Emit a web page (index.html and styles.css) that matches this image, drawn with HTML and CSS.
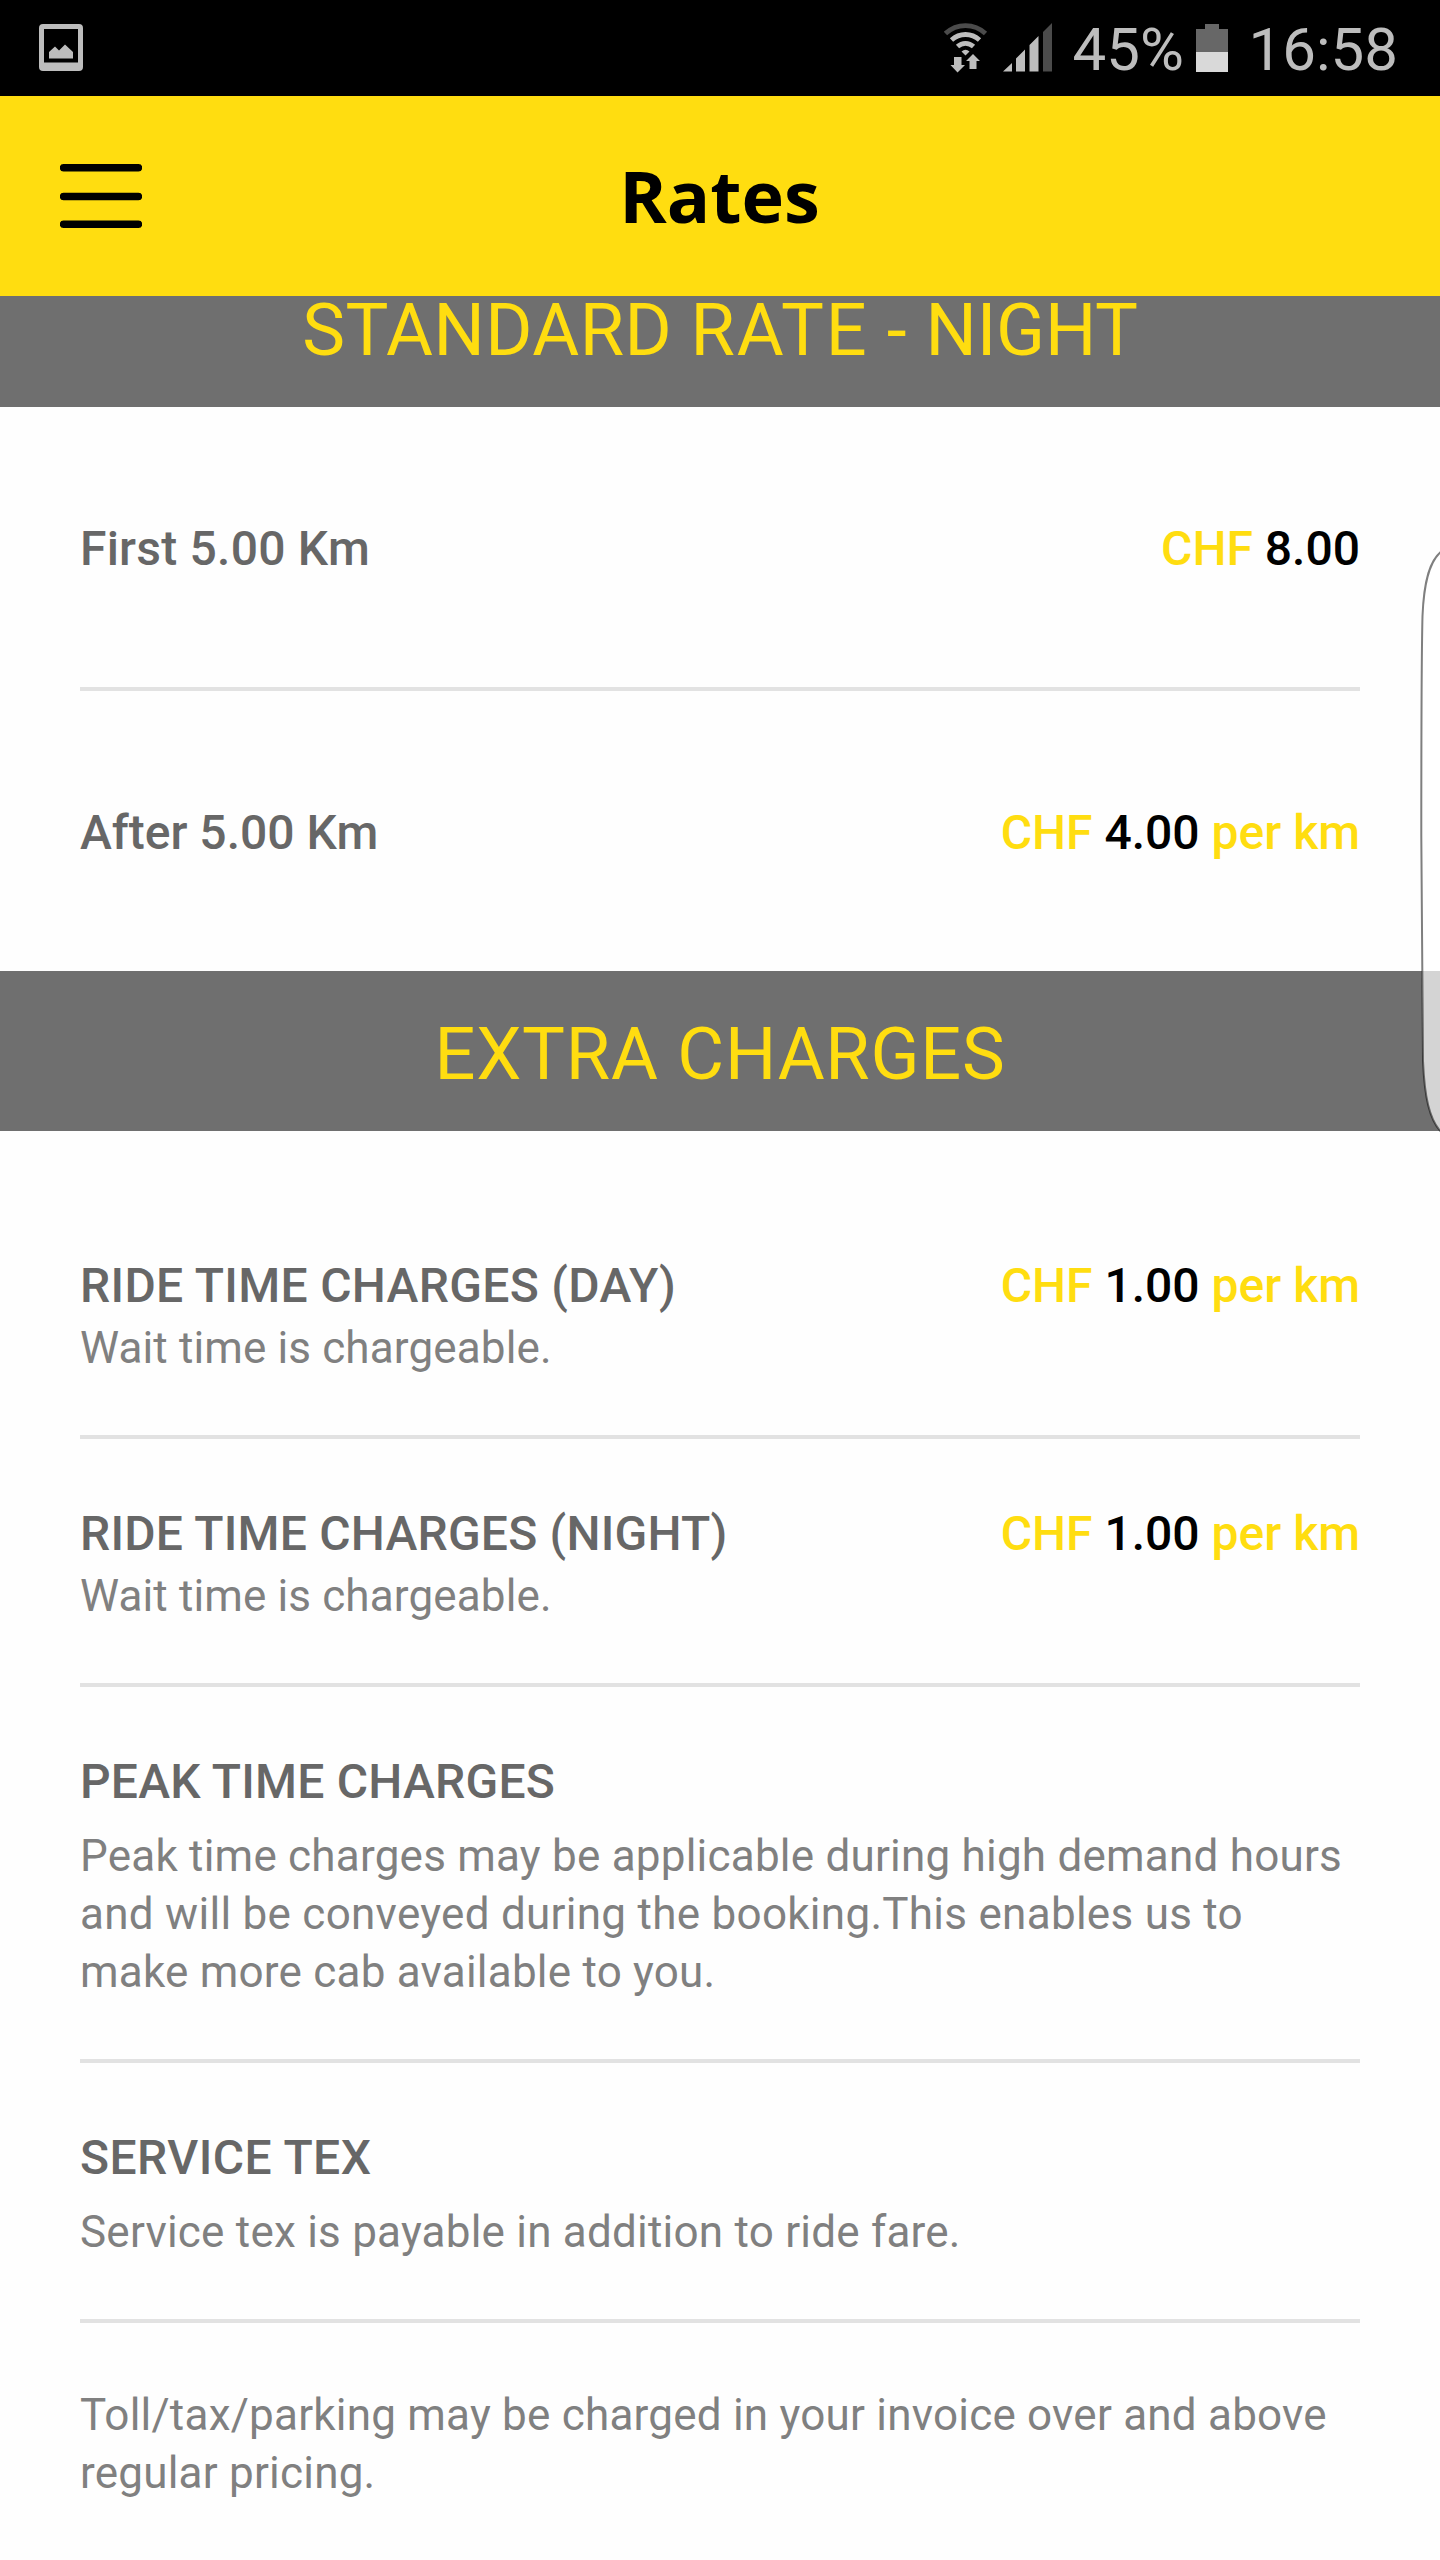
FILE: index.html
```html
<!DOCTYPE html>
<html lang="en">
<head>
<meta charset="utf-8">
<title>Rates</title>
<link rel="stylesheet" href="styles.css">
</head>
<body>
<div class="screen">
  <div class="statusbar">
    <svg class="icon-picture" width="44" height="48" viewBox="0 0 44 48">
      <path fill="#bdbdbd" fill-rule="evenodd" d="M4 0H40Q44 0 44 4V43Q44 47 40 47H4Q0 47 0 43V4Q0 0 4 0ZM5 5V38.500H39V5Z"/>
      <path fill="#bdbdbd" d="M10 34.500V28L16 22.500L20 26.500L26 20.500L34 28V34.500Z"/>
    </svg>
    <div class="status-right">
      <svg class="icon-wifi" width="44" height="50" viewBox="0 0 44 50">
        <g fill="none" stroke-width="4.800">
          <path stroke="#4b4b4b" d="M1.500 10.500Q10 2.600 21.500 2.600T41.500 10.500"/>
          <path stroke="#bdbdbd" d="M7.500 17Q13.500 11.500 21.500 11.500T35.500 17"/>
          <path stroke="#bdbdbd" d="M13.500 23.500Q17 20.300 21.500 20.300T29.500 23.500"/>
        </g>
        <path fill="#bdbdbd" d="M17.500 28.500Q21.500 25 25.500 28.500L21.500 32.500ZM10 34H17.500V42H21L13.500 49.500L6.500 42H10ZM25.500 46V38H22L29 31L36 38H32.500V46Z"/>
      </svg>
      <svg class="icon-signal" width="50" height="49" viewBox="0 0 50 49">
        <path fill="#bdbdbd" d="M0 48.500L9 40V48.500ZM13 48.500V35.500L22 26.500V48.500ZM26.500 48.500V22L35.500 13V48.500Z"/>
        <path fill="#4b4b4b" d="M40 48.500V9L49 0V48.500Z"/>
      </svg>
      <span class="status-text percent">45%</span>
      <svg class="icon-battery" width="32" height="48" viewBox="0 0 32 48">
        <path fill="#676767" d="M0 5H9V0H23V5H32V28H0Z"/>
        <path fill="#d9d9d9" d="M0 28H32V48H0Z"/>
      </svg>
      <span class="status-text clock">16:58</span>
    </div>
  </div>
  <header class="header">
    <svg class="icon-menu" width="82" height="64" viewBox="0 0 82 64">
      <path stroke="#000" stroke-width="7.400" stroke-linecap="round" d="M3.500 3.700H78.500M3.500 32.500H78.500M3.500 60.200H78.500"/>
    </svg>
    <h1 class="title">Rates</h1>
  </header>
  <main class="content">
    <h2 class="band band-clipped">STANDARD <span class="rate-word">RATE</span> - <span class="night-word">NIGHT</span></h2>
    <section class="list">
      <div class="row row-fare"><span class="label">First 5.00 Km</span><span class="price">CHF <b>8.00</b></span></div>
      <div class="row row-fare"><span class="label snug">After 5.00 Km</span><span class="price">CHF <b>4.00</b> per km</span></div>
    </section>
    <h2 class="band">EXTRA CHARGES</h2>
    <section class="list extras">
      <div class="row row-ride">
        <div><div class="label day">RIDE TIME CHARGES (DAY)</div><p class="note tight">Wait time is chargeable.</p></div>
        <span class="price">CHF <b>1.00</b> per km</span>
      </div>
      <div class="row row-ride">
        <div><div class="label">RIDE TIME CHARGES (NIGHT)</div><p class="note tight">Wait time is chargeable.</p></div>
        <span class="price">CHF <b>1.00</b> per km</span>
      </div>
      <div class="row row-info">
        <div class="label">PEAK TIME CHARGES</div>
        <p class="note">Peak time charges may be applicable during high demand hours<br><span class="loose">and will be conveyed during the booking.This enables us to</span><br>make more cab available to you.</p>
      </div>
      <div class="row row-info">
        <div class="label wide">SERVICE TEX</div>
        <p class="note">Service tex is payable in addition to ride fare.</p>
      </div>
      <div class="row row-toll">
        <p class="note">Toll/tax/parking may be charged in your invoice over and above<br>regular pricing.</p>
      </div>
    </section>
  </main>
  <svg class="edge-handle" width="22" height="590" viewBox="0 0 22 590">
    <path fill="#fff" fill-opacity=".7" stroke="#000" stroke-opacity=".5" stroke-width="2" d="M24 5C12 14 6 34 4.500 70C3.500 110 3.300 200 3.300 290C3.300 380 4 460 5 515C6.500 550 11 574 24 587"/>
  </svg>
</div>
</body>
</html>
```
FILE: styles.css
```css
* { box-sizing: border-box; }
body { margin: 0; background: #fefefe; }
.screen {
  position: relative;
  width: 1440px;
  height: 2560px;
  overflow: hidden;
  background: #fefefe;
  font-family: Roboto, "Liberation Sans", sans-serif;
}
h1, h2, p { margin: 0; font-weight: 400; }
svg { display: block; flex: none; }

.statusbar {
  display: flex;
  justify-content: space-between;
  align-items: flex-start;
  height: 96px;
  padding: 0 42px 0 39px;
  background: #000;
  color: #bdbdbd;
}
.icon-picture { margin-top: 24px; }
.status-right { display: flex; align-items: flex-start; }
.icon-wifi { margin-top: 23px; }
.icon-signal { margin: 23px 0 0 15px; }
.status-text { font-size: 60px; line-height: 100px; white-space: nowrap; }
.percent { width: 112px; margin-left: 20px; }
.icon-battery { margin: 24px 21px 0 11px; }

.header {
  display: grid;
  grid-template-columns: 82px 1fr 82px;
  align-items: center;
  height: 200px;
  padding: 0 60px;
  background: #ffdd10;
}
.title {
  padding: 0 1px 2px 0;
  font: 700 72px/198px "Open Sans", "Noto Sans", sans-serif;
  text-align: center;
  color: #000;
}

.band {
  height: 160px;
  background: #6f6f6f;
  color: #ffdd10;
  font-size: 72px;
  line-height: 167px;
  letter-spacing: .75px;
  text-align: center;
}
.band-clipped { height: 111px; line-height: 69px; letter-spacing: .47px; }
.rate-word { letter-spacing: 1.8px; }
.night-word { letter-spacing: -.2px; }

.list { padding: 0 80px; }
.row + .row { border-top: 4px solid #e2e2e2; }
.label, .price { font-size: 48px; line-height: 56px; font-weight: 500; white-space: nowrap; }
.label { color: #676767; letter-spacing: .22px; }
.label.snug { letter-spacing: 0; }
.label.day { letter-spacing: .32px; }
.label.wide { letter-spacing: .45px; }
.price { color: #ffdd10; }
.price b { font-weight: 500; color: #000; }
.note { color: #808080; font-size: 44px; line-height: 58px; letter-spacing: .22px; white-space: nowrap; }
.loose { letter-spacing: .28px; }

.row-fare, .row-ride { display: flex; justify-content: space-between; }
.row-fare { height: 280px; padding-top: 114px; }
.row-fare + .row-fare { height: 284px; }
.extras { padding-top: 58px; }
.row-ride { height: 248px; padding-top: 67px; }
.row-ride:first-child { height: 246px; padding-top: 69px; }
.tight { margin-top: 5px; letter-spacing: .13px; }
.row-info { padding: 67px 0 58px; }
.row-info .note { margin-top: 17px; }
.row-toll { padding-top: 63px; }

.edge-handle { position: absolute; top: 546px; right: 0; }
```
